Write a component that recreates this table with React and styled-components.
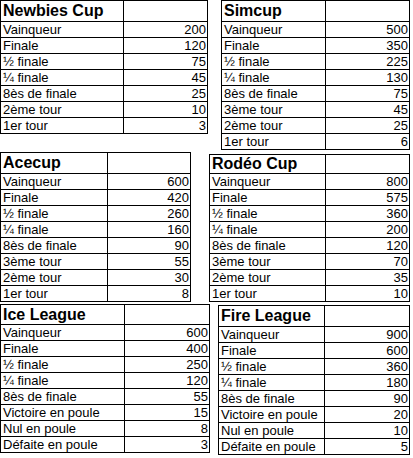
import styled, { createGlobalStyle } from "styled-components";

const GlobalStyle = createGlobalStyle`
  html, body {
    margin: 0;
    padding: 0;
    background: #ffffff;
  }
  body {
    font-family: "Liberation Sans", Arial, sans-serif;
    color: #000000;
  }
`;

const Sheet = styled.div`
  width: 413px;
  display: flex;
  flex-direction: column;
`;

const Row = styled.div`
  display: flex;
  align-items: flex-start;
`;

const Board = styled.div`
  display: grid;
  grid-template-columns: ${(p) => p.$label}px ${(p) => p.$value}px;
  grid-template-rows: ${(p) => p.$head}px;
  grid-auto-rows: 16px;
  border-top: 1px solid #000;
  border-left: 1px solid #000;
  margin-left: ${(p) => p.$left || 0}px;
  margin-top: ${(p) => p.$top || 0}px;
`;

const Cell = styled.div`
  box-sizing: border-box;
  border-right: 1px solid #000;
  border-bottom: 1px solid #000;
  font-size: 13px;
  line-height: 15px;
  white-space: nowrap;
  overflow: hidden;
`;

const HeadCell = styled(Cell)`
  line-height: ${(p) => p.$h - 1}px;
  font-size: 16px;
  font-weight: bold;
  padding-left: 2px;
`;

const LabelCell = styled(Cell)`
  padding-left: 2px;
`;

const ValueCell = styled(Cell)`
  text-align: right;
  padding-right: 1px;
`;

const cup = ["Vainqueur", "Finale", "½ finale", "¼ finale", "8ès de finale"];
const league = [...cup, "Victoire en poule", "Nul en poule", "Défaite en poule"];

const rows = [
  [
    {
      name: "Newbies Cup",
      labels: [...cup, "2ème tour", "1er tour"],
      values: [200, 120, 75, 45, 25, 10, 3],
      label: 123, value: 84, head: 21,
    },
    {
      name: "Simcup",
      labels: [...cup, "3ème tour", "2ème tour", "1er tour"],
      values: [500, 350, 225, 130, 75, 45, 25, 6],
      label: 104, value: 84, head: 21, left: 13,
    },
  ],
  [
    {
      name: "Acecup",
      labels: [...cup, "3ème tour", "2ème tour", "1er tour"],
      values: [600, 420, 260, 160, 90, 55, 30, 8],
      label: 107, value: 83, head: 21, top: 2,
    },
    {
      name: "Rodéo Cup",
      labels: [...cup, "3ème tour", "2ème tour", "1er tour"],
      values: [800, 575, 360, 200, 120, 70, 35, 10],
      label: 116, value: 84, head: 19, left: 18, top: 4,
    },
  ],
  [
    {
      name: "Ice League",
      labels: league,
      values: [600, 400, 250, 120, 55, 15, 8, 3],
      label: 124, value: 85, head: 20, top: 2,
    },
    {
      name: "Fire League",
      labels: league,
      values: [900, 600, 360, 180, 90, 20, 10, 5],
      label: 106, value: 85, head: 21, left: 8, top: 3,
    },
  ],
];

function PrizeTable({ t }) {
  return (
    <Board
      $label={t.label}
      $value={t.value}
      $head={t.head}
      $left={t.left}
      $top={t.top}
    >
      <HeadCell $h={t.head}>{t.name}</HeadCell>
      <HeadCell $h={t.head} />
      {t.labels.map((l, i) => [
        <LabelCell key={"l" + i}>{l}</LabelCell>,
        <ValueCell key={"v" + i}>{t.values[i]}</ValueCell>,
      ])}
    </Board>
  );
}

export default function App() {
  return (
    <>
      <GlobalStyle />
      <Sheet>
        {rows.map((r, i) => (
          <Row key={i}>
            {r.map((t) => (
              <PrizeTable key={t.name} t={t} />
            ))}
          </Row>
        ))}
      </Sheet>
    </>
  );
}
